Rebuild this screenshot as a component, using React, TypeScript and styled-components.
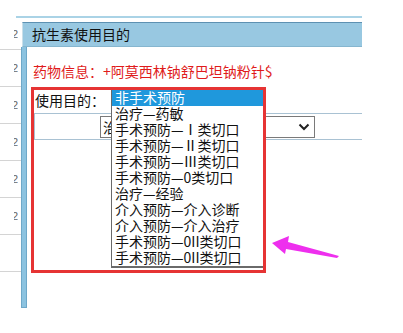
import styled, { createGlobalStyle } from 'styled-components';

const GlobalStyle = createGlobalStyle`
    body {
        margin: 0;
        background: #ffffff;
        font-family: "Noto Sans CJK SC", "Noto Sans", sans-serif;
    }
`;

const purposes = [
    '非手术预防',
    '治疗—药敏',
    '手术预防—Ⅰ类切口',
    '手术预防—Ⅱ类切口',
    '手术预防—Ⅲ类切口',
    '手术预防—0类切口',
    '治疗—经验',
    '介入预防—介入诊断',
    '介入预防—介入治疗',
    '手术预防—0II类切口',
    '手术预防—0II类切口',
];

const App = () => {
    const rows = [0, 1, 2, 3, 4, 5, 6];

    return (
        <Screen>
            <GlobalStyle />
            <BackPage>
                <TopRule />
                <BackRows>
                    {rows.map((r) => (
                        <BackRow key={r}>
                            <BackMark>{r < 6 ? '2' : ''}</BackMark>
                        </BackRow>
                    ))}
                </BackRows>
            </BackPage>

            <Dialog>
                <TitleBar>抗生素使用目的</TitleBar>
                <DialogBody>
                    <SideStrip />
                    <Content>
                        <InfoLine>药物信息：+阿莫西林钠舒巴坦钠粉针$</InfoLine>
                        <Form>
                            <LabelRow>使用目的：</LabelRow>
                            <CellRow>
                                <SelectBox>
                                    <SelectValue>治疗—药敏</SelectValue>
                                    <svg width='12' height='8' viewBox='0 0 12 8'>
                                        <polyline
                                            points='1.5,1.5 6,6 10.5,1.5'
                                            fill='none'
                                            stroke='#222'
                                            strokeWidth='2'
                                        />
                                    </svg>
                                </SelectBox>
                            </CellRow>
                        </Form>
                    </Content>
                </DialogBody>
            </Dialog>

            <OptionList>
                {purposes.map((p, i) => (
                    <OptionItem key={i} selected={i === 0}>
                        {p}
                    </OptionItem>
                ))}
            </OptionList>

            <RedFrame />

            <Arrow width='403' height='333' viewBox='0 0 403 333'>
                <polygon
                    points='272,243 289,236 288,242 339,256 337,258 286,249 285,254'
                    fill='#ee2fee'
                />
            </Arrow>
        </Screen>
    );
};

export default App;

const Screen = styled.div`
    position: relative;
    width: 403px;
    height: 333px;
    overflow: hidden;
    background: #ffffff;
`;

const BackPage = styled.div`
    padding-top: 16px;
`;

const TopRule = styled.div`
    margin-left: 16px;
    width: 346px;
    height: 2px;
    background: #aad3e6;
`;

const BackRows = styled.div`
    display: flex;
    flex-direction: column;
`;

const BackRow = styled.div`
    width: 22px;
    height: 37px;
    display: flex;
    align-items: center;
    justify-content: flex-end;
    border-bottom: 1px solid #d4d4d4;
    box-sizing: border-box;
    padding-right: 4px;
    &:first-child {
        height: 32px;
    }
`;

const BackMark = styled.span`
    width: 4px;
    overflow: hidden;
    direction: rtl;
    font-size: 11px;
    line-height: 12px;
    color: #666;
    font-family: "Liberation Sans", sans-serif;
`;

const Dialog = styled.div`
    position: absolute;
    left: 21px;
    top: 22px;
    width: 341px;
    height: 286px;
    display: flex;
    flex-direction: column;
`;

const TitleBar = styled.div`
    margin-left: 1px;
    height: 25px;
    box-sizing: border-box;
    border-top: 1px solid #5d91b2;
    border-left: 1px solid #c9dfe9;
    border-bottom: 1px solid #86b6cf;
    background: #98c8e1;
    padding-left: 9px;
    font-size: 14px;
    line-height: 23px;
    color: #111;
`;

const DialogBody = styled.div`
    flex: 1;
    display: flex;
`;

const SideStrip = styled.div`
    width: 6px;
    box-sizing: border-box;
    background: #8cc3e0;
    border-left: 1px solid #6ea8c9;
    border-right: 1px solid #6ea8c9;
    border-bottom: 1px solid #6ea8c9;
`;

const Content = styled.div`
    flex: 1;
    background: #ffffff;
    padding: 16px 0 0 6px;
`;

const InfoLine = styled.div`
    font-size: 14px;
    line-height: 16px;
    color: #e01b1b;
    white-space: nowrap;
`;

const Form = styled.div`
    margin-top: 8px;
    margin-left: 1px;
`;

const LabelRow = styled.div`
    height: 26px;
    padding-left: 1px;
    font-size: 14px;
    line-height: 26px;
    color: #111;
`;

const CellRow = styled.div`
    height: 27px;
    box-sizing: border-box;
    border-top: 1px solid #a9c2d3;
    border-bottom: 1px solid #a9c2d3;
    border-left: 1px solid #a9c2d3;
    padding: 2px 0 0 65px;
`;

const SelectBox = styled.div`
    width: 215px;
    height: 22px;
    box-sizing: border-box;
    border: 1px solid #7a7a7a;
    display: flex;
    align-items: center;
    justify-content: space-between;
    padding: 0 4px 0 2px;
    background: #ffffff;
`;

const SelectValue = styled.span`
    font-size: 14px;
    line-height: 20px;
    color: #111;
`;

const OptionList = styled.div`
    position: absolute;
    left: 111px;
    top: 90px;
    width: 152px;
    box-sizing: border-box;
    border-left: 1px solid #6a6a6a;
    border-bottom: 2px solid #6a6a6a;
    background: #ffffff;
    display: flex;
    flex-direction: column;
`;

const OptionItem = styled.div<{ selected?: boolean }>`
    height: 16px;
    padding-left: 3px;
    font-size: 14px;
    line-height: 15px;
    white-space: nowrap;
    color: ${({ selected }) => (selected ? '#ffffff' : '#111111')};
    background: ${({ selected }) => (selected ? '#1f98dc' : 'transparent')};
`;

const RedFrame = styled.div`
    position: absolute;
    left: 31px;
    top: 87px;
    width: 235px;
    height: 186px;
    box-sizing: border-box;
    border: 3px solid #e63434;
    pointer-events: none;
`;

const Arrow = styled.svg`
    position: absolute;
    left: 0;
    top: 0;
    pointer-events: none;
`;
